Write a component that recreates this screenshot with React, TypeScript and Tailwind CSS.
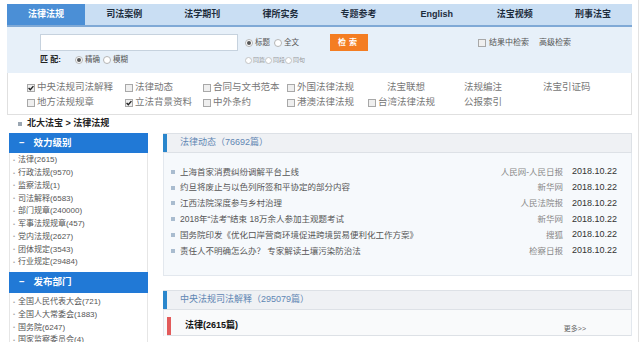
import React from "react";

function Box({ checked }: { checked?: boolean }) {
  return (
    <span className="inline-flex items-center justify-center w-[8px] h-[8px] border border-[#a8a8a8] bg-[#efefef] mr-[2px] shrink-0">
      {checked && (
        <svg width="6" height="6" viewBox="0 0 6 6">
          <path d="M0.6 3 L2.3 4.7 L5.4 1.1" stroke="#222" strokeWidth="1.4" fill="none" />
        </svg>
      )}
    </span>
  );
}

function Radio({ checked }: { checked?: boolean }) {
  return (
    <span className="inline-flex items-center justify-center w-[8px] h-[8px] rounded-full border border-[#b5b5b5] bg-white mr-[2px] shrink-0">
      {checked && <span className="w-[4px] h-[4px] rounded-full bg-[#555]" />}
    </span>
  );
}

const tabs = ["法律法规", "司法案例", "法学期刊", "律所实务", "专题参考", "English", "法宝视频", "刑事法宝"];

const level = [
  "法律(2615)",
  "行政法规(9570)",
  "监察法规(1)",
  "司法解释(6583)",
  "部门规章(240000)",
  "军事法规规章(457)",
  "党内法规(2627)",
  "团体规定(3543)",
  "行业规定(29484)",
];

const depts = ["全国人民代表大会(721)", "全国人大常委会(1883)", "国务院(6247)", "国家监察委员会(4)"];

const news: [string, string][] = [
  ["上海首家消费纠纷调解平台上线", "人民网-人民日报"],
  ["约旦将废止与以色列所签和平协定的部分内容", "新华网"],
  ["江西法院深度参与乡村治理", "人民法院报"],
  ["2018年“法考”结束 18万余人参加主观题考试", "新华网"],
  ["国务院印发《优化口岸营商环境促进跨境贸易便利化工作方案》", "搜狐"],
  ["责任人不明确怎么办？  专家解读土壤污染防治法", "检察日报"],
];

export default function App() {
  return (
    <div className="w-[640px] h-[342px] overflow-hidden bg-white font-['Liberation_Sans','Noto_Sans_CJK_SC',sans-serif]">
      <div className="w-[639px] h-[342px] border-r border-[#e2e2e2] pt-[4px] pl-[7px]">
        <div className="w-[625px]">
          {/* Nav */}
          <div className="grid grid-cols-8 h-[23px] bg-[#c9def3] border-b-2 border-[#7fa9d6]">
            {tabs.map((t, i) => (
              <div
                key={t}
                className={
                  "flex items-center justify-center text-[9px] font-bold " +
                  (i === 0 ? "bg-[#4b8fd6] text-white" : "text-[#1d2c3c]")
                }
              >
                {t}
              </div>
            ))}
          </div>

          {/* Search panel */}
          <div className="h-[46px] bg-[#e7f0f9] pl-[33px] pt-[7px]">
            <div className="flex items-center h-[17px]">
              <div className="w-[198px] h-[17px] border border-[#c6d2de] bg-white" />
              <div className="w-[92px] flex items-center pl-[7px] text-[7.5px] text-[#555]">
                <Radio checked />
                <span>标题</span>
                <span className="w-[4px]" />
                <Radio />
                <span>全文</span>
              </div>
              <div className="w-[38px] h-[17px] bg-[#f47d22] text-white text-[8px] font-bold flex items-center justify-center tracking-[3px]">
                检索
              </div>
              <div className="ml-[110px] flex items-center text-[8px] text-[#555]">
                <Box />
                <span className="ml-[1px]">结果中检索</span>
                <span className="ml-[10px]">高级检索</span>
              </div>
            </div>
            <div className="flex items-center h-[14px] mt-[2px] text-[7.5px] text-[#555]">
              <div className="w-[205px] shrink-0 flex items-center">
                <span className="w-[35px] font-bold text-[#222] text-[8px]">匹 配:</span>
                <Radio checked />
                <span>精确</span>
                <span className="w-[3px]" />
                <Radio />
                <span>模糊</span>
              </div>
              {["同篇", "同段", "同句"].map((x) => (
                <div key={x} className="w-[20px] shrink-0 flex items-center whitespace-nowrap text-[6px] text-[#999]">
                  <span className="inline-block w-[7px] h-[7px] rounded-full border border-[#c4c4c4] bg-white mr-[1px] shrink-0" />
                  <span>{x}</span>
                </div>
              ))}
            </div>
          </div>

          {/* Checkbox area */}
          <div className="h-[42px] border border-t-0 border-[#e0e0e0] bg-white pl-[19px] pt-[7px] text-[9.5px] text-[#777]">
            <div className="grid grid-cols-[98px_78px_84px_81px_96px_79px_1fr] h-[15px] items-center">
              <span className="flex items-center"><Box checked />中央法规司法解释</span>
              <span className="flex items-center"><Box />法律动态</span>
              <span className="flex items-center"><Box />合同与文书范本</span>
              <span className="flex items-center"><Box />外国法律法规</span>
              <span className="pl-[19px]">法宝联想</span>
              <span>法规编注</span>
              <span>法宝引证码</span>
            </div>
            <div className="grid grid-cols-[98px_78px_84px_81px_96px_79px_1fr] h-[15px] items-center">
              <span className="flex items-center"><Box />地方法规规章</span>
              <span className="flex items-center"><Box checked />立法背景资料</span>
              <span className="flex items-center"><Box />中外条约</span>
              <span className="flex items-center"><Box />港澳法律法规</span>
              <span className="flex items-center"><Box />台湾法律法规</span>
              <span>公报索引</span>
              <span />
            </div>
          </div>

          {/* Breadcrumb */}
          <div className="h-[18px] flex items-center pl-[11px] text-[9px] font-bold text-[#222]">
            <span className="w-[4px] h-[4px] bg-[#9aa6b2] mr-[5px]" />
            北大法宝 &gt; 法律法规
          </div>

          {/* Main */}
          <div className="flex gap-[15px] pl-[2px]">
            {/* Sidebar */}
            <div className="w-[139px] shrink-0">
              <div className="h-[20px] bg-[#2179d6] flex items-center pl-[10px] text-white text-[9.5px] font-bold">
                <span className="mr-[9px] font-bold">−</span>效力级别
              </div>
              <div className="border-x border-[#e6e6e6] pt-[1px] pb-[3px]">
                {level.map((l) => (
                  <div key={l} className="h-[12.75px] flex items-center pl-[3px] text-[8px] text-[#555]">
                    <span className="text-[#aaa] text-[6px] mr-[3px]">•</span>
                    {l}
                  </div>
                ))}
              </div>
              <div className="h-[21px] bg-[#2179d6] flex items-center pl-[10px] text-white text-[9.5px] font-bold">
                <span className="mr-[9px] font-bold">−</span>发布部门
              </div>
              <div className="border-x border-[#e6e6e6] pt-[3px]">
                {depts.map((l) => (
                  <div key={l} className="h-[12.75px] flex items-center pl-[3px] text-[8px] text-[#555]">
                    <span className="text-[#aaa] text-[6px] mr-[3px]">•</span>
                    {l}
                  </div>
                ))}
              </div>
            </div>

            {/* Content */}
            <div className="w-[469px] shrink-0">
              <div className="h-[20px] flex bg-[#eff1f4] border-y border-r border-[#dde1e6]">
                <div className="w-[4px] bg-[#2a86cc]" />
                <div className="flex items-center pl-[13px] text-[9px] text-[#5f86b3]">法律动态（76692篇）</div>
              </div>
              <div className="h-[123px] bg-[#f6f9fc] border-x border-b border-[#e3e8ee] pt-[11px] pl-[7px] pr-[14px]">
                {news.map(([t, s]) => (
                  <div key={t} className="h-[15.8px] flex items-center text-[8.5px]">
                    <span className="w-[4px] h-[4px] bg-[#a9bccf] mr-[5px] shrink-0" />
                    <span className="text-[#555] flex-1 whitespace-nowrap overflow-hidden">{t}</span>
                    <span className="text-[#888] ml-[8px] whitespace-nowrap">{s}</span>
                    <span className="text-[#333] ml-[9px] w-[45px] text-[9px] text-right">2018.10.22</span>
                  </div>
                ))}
              </div>

              <div className="mt-[14px] h-[20px] flex bg-[#eff1f4] border-y border-r border-[#dde1e6]">
                <div className="w-[4px] bg-[#2a86cc]" />
                <div className="flex items-center pl-[13px] text-[9px] text-[#5f86b3]">中央法规司法解释（295079篇）</div>
              </div>
              <div className="bg-[#f9fafb] border-x border-[#e3e8ee] pt-[7px] pl-[3px]">
                <div className="h-[19px] flex items-stretch border-b border-[#dde1e6]">
                  <div className="w-[4px] bg-[#e25b5b]" />
                  <div className="flex-1 flex items-center pl-[14px] text-[9px] font-bold text-[#111]">法律(2615篇)</div>
                  <div className="flex items-end pb-[1px] pr-[45px] text-[7px] text-[#666]">更多&gt;&gt;</div>
                </div>
              </div>
            </div>
          </div>
        </div>
      </div>
    </div>
  );
}
